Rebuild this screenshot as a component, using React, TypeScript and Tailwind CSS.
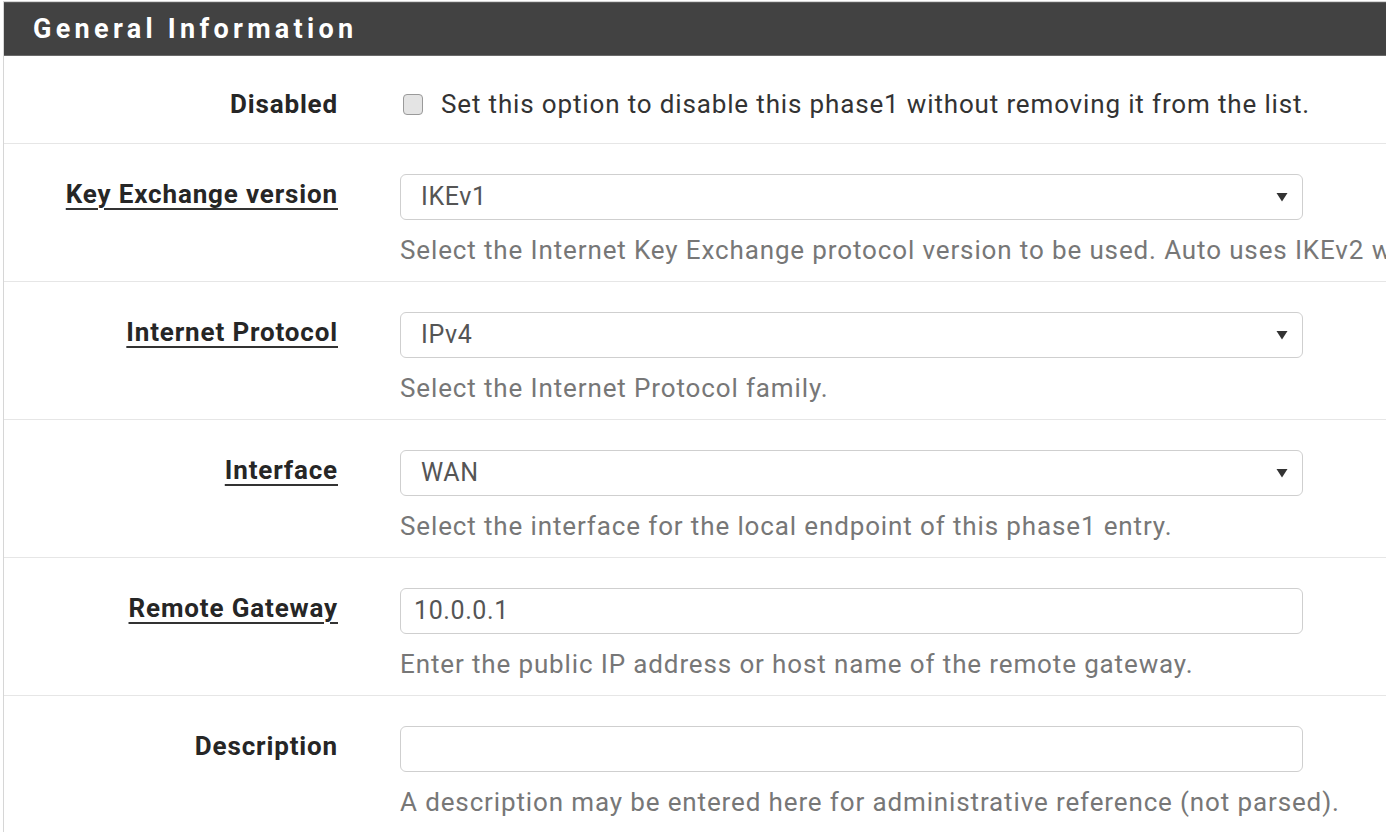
import React from "react";

const font = { fontFamily: "Roboto, 'Noto Sans', sans-serif" };

function Caret() {
  return (
    <svg width="12" height="10" viewBox="0 0 12 10" className="absolute right-[14px] top-1/2 -translate-y-1/2">
      <path d="M0.5 1 L11.5 1 L6 9.5 Z" fill="#333" />
    </svg>
  );
}

function Row({
  label,
  underline,
  children,
  help,
}: {
  label: string;
  underline?: boolean;
  children: React.ReactNode;
  help?: string;
}) {
  return (
    <div className="flex border-b border-[#e6e6e6] pt-[30px] pb-[15px]">
      <div className="w-[334px] shrink-0 flex justify-end">
        <span
          className={
            "text-[26px] font-bold text-[#262626] tracking-[0.85px] leading-[40px] whitespace-nowrap " +
            (underline ? "underline decoration-[2px] underline-offset-[5px] decoration-[#333]" : "")
          }
        >
          {label}
        </span>
      </div>
      <div className="ml-[62px] flex flex-col">
        {children}
        {help && (
          <div className="mt-[14px] text-[26px] tracking-[0.87px] leading-[32px] text-[#777] whitespace-nowrap">
            {help}
          </div>
        )}
      </div>
    </div>
  );
}

function SelectBox({ value }: { value: string }) {
  return (
    <div className="relative w-[903px] h-[46px] rounded-[6px] border border-[#cfcfcf] bg-white flex items-center pl-[20px] text-[25px] tracking-[0.6px] text-[#555]">
      {value}
      <Caret />
    </div>
  );
}

function InputBox({ value }: { value: string }) {
  return (
    <div className="w-[903px] h-[46px] rounded-[6px] border border-[#cfcfcf] bg-white flex items-center pl-[13px] text-[25px] tracking-[0.6px] text-[#555]">
      {value}
    </div>
  );
}

export default function App() {
  return (
    <div className="w-[1386px] h-[832px] overflow-hidden bg-white" style={font}>
      <div className="ml-[3px] mt-[1px] border-l border-t border-[#d6d6d6] w-[1500px]">
        <div className="h-[54px] bg-[#424242] border-t border-[#5a5a5a] border-b border-b-[#6a6a6a] flex items-center pl-[29px]">
          <span className="text-white font-bold text-[27px] tracking-[4.3px]">General Information</span>
        </div>
        <div className="flex h-[88px] border-b border-[#e6e6e6] items-start pt-[33px]">
          <div className="w-[334px] shrink-0 flex justify-end">
            <span className="text-[26px] font-bold tracking-[0.85px] leading-[30px] text-[#262626]">Disabled</span>
          </div>
          <div className="ml-[62px] flex items-center h-[30px]">
            <span className="ml-[3px] w-[20px] h-[21px] rounded-[4px] border border-[#9a9a9a] bg-[#e4e4e4]" />
            <span className="ml-[18px] text-[26px] tracking-[0.85px] leading-[30px] text-[#333]">
              Set this option to disable this phase1 without removing it from the list.
            </span>
          </div>
        </div>
        <Row
          label="Key Exchange version"
          underline
          help="Select the Internet Key Exchange protocol version to be used. Auto uses IKEv2 when initiator, and accepts either IKEv1 or IKEv2 as responder."
        >
          <SelectBox value="IKEv1" />
        </Row>
        <Row label="Internet Protocol" underline help="Select the Internet Protocol family.">
          <SelectBox value="IPv4" />
        </Row>
        <Row label="Interface" underline help="Select the interface for the local endpoint of this phase1 entry.">
          <SelectBox value="WAN" />
        </Row>
        <Row
          label="Remote Gateway"
          underline
          help="Enter the public IP address or host name of the remote gateway."
        >
          <InputBox value="10.0.0.1" />
        </Row>
        <Row
          label="Description"
          help="A description may be entered here for administrative reference (not parsed)."
        >
          <InputBox value="" />
        </Row>
      </div>
    </div>
  );
}
